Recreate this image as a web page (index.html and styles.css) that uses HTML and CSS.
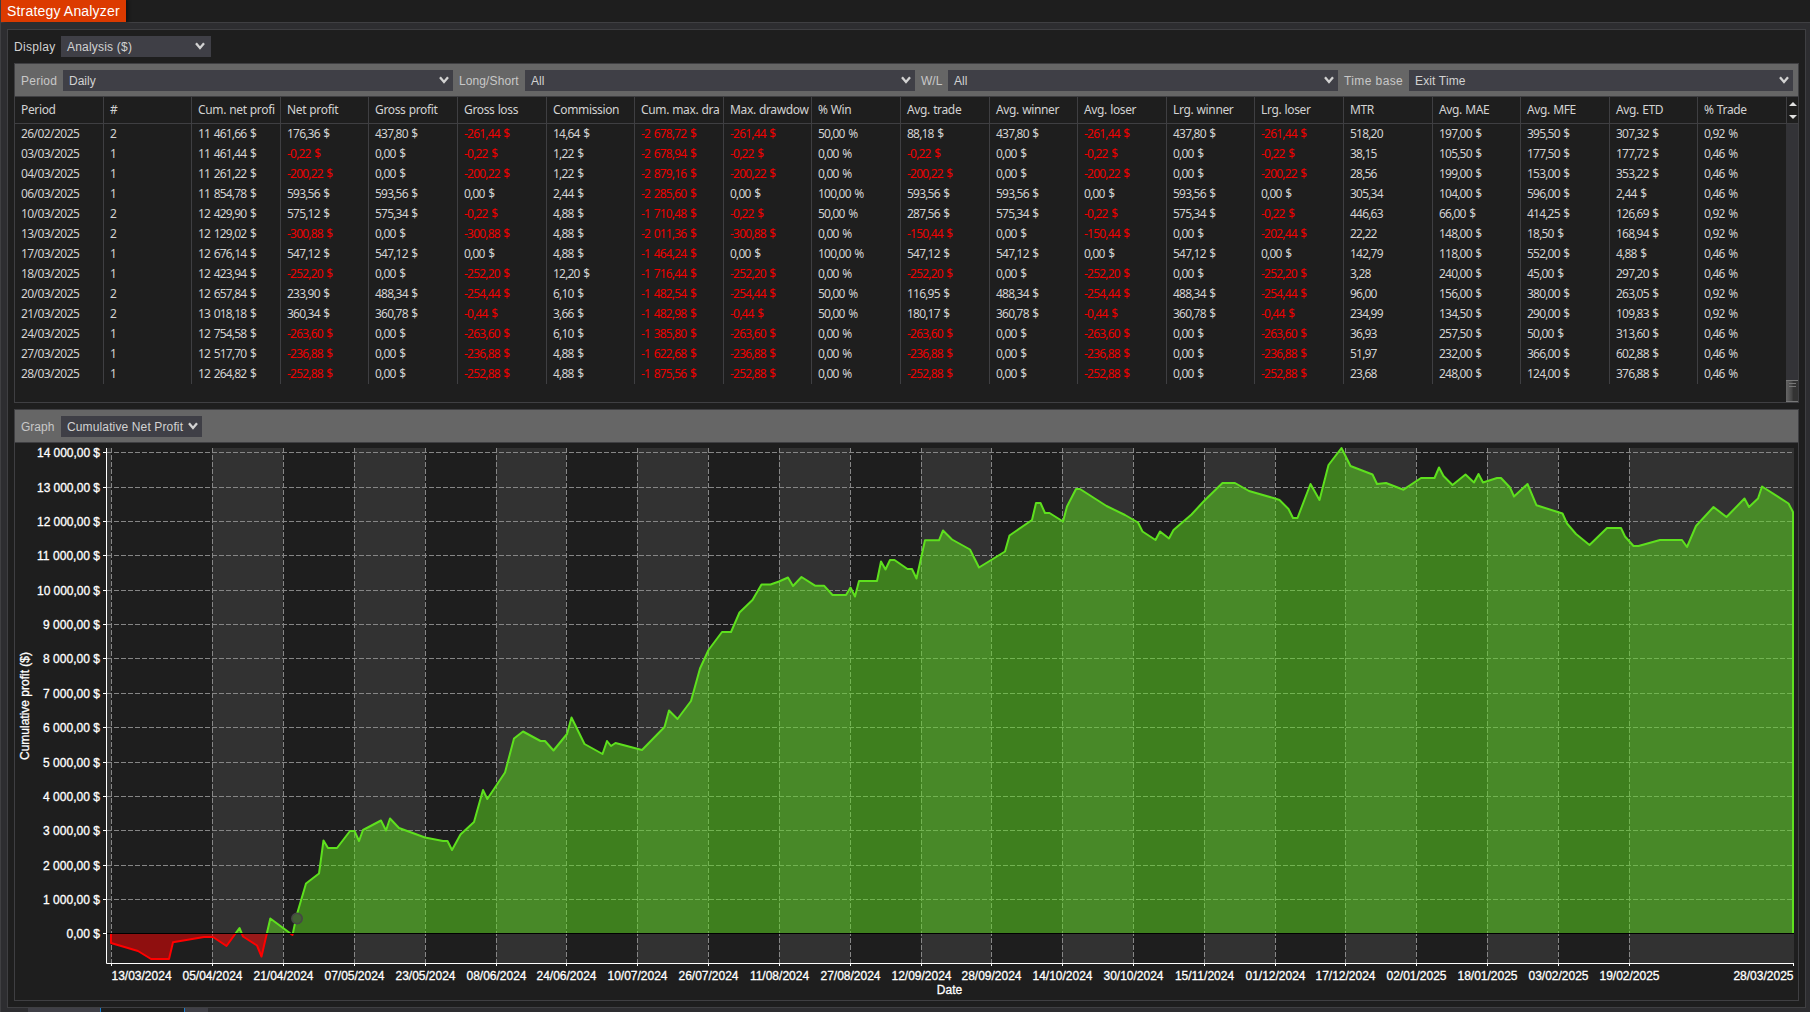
FILE: index.html
```html
<!DOCTYPE html>
<html lang="en">
<head>
<meta charset="utf-8">
<title>Strategy Analyzer</title>
<link rel="stylesheet" href="styles.css">
</head>
<body>
<div class="window">
  <header class="tabs"><div class="tab">Strategy Analyzer</div></header>
  <main class="frame">
    <div class="content">
      <div class="display-bar">
        <span class="label">Display</span>
        <div class="select select-display"><span>Analysis ($)</span><svg class="chevron" viewBox="0 0 10 8"><path d="M1 1.2 5 6 9 1.2"/></svg></div>
      </div>
      <section class="panel table-panel">
        <div class="toolbar">
          <span class="label label-period">Period</span>
          <div class="select"><span>Daily</span><svg class="chevron" viewBox="0 0 10 8"><path d="M1 1.2 5 6 9 1.2"/></svg></div>
          <span class="label label-side">Long/Short</span>
          <div class="select"><span>All</span><svg class="chevron" viewBox="0 0 10 8"><path d="M1 1.2 5 6 9 1.2"/></svg></div>
          <span class="label label-wl">W/L</span>
          <div class="select"><span>All</span><svg class="chevron" viewBox="0 0 10 8"><path d="M1 1.2 5 6 9 1.2"/></svg></div>
          <span class="label label-time">Time base</span>
          <div class="select select-time"><span>Exit Time</span><svg class="chevron" viewBox="0 0 10 8"><path d="M1 1.2 5 6 9 1.2"/></svg></div>
        </div>
        <div class="grid-area">
          <div class="grid" id="grid"></div>
          <div class="scrollbar">
            <div class="arrows">
              <svg viewBox="0 0 12 26"><path d="M2 9h8L6 5zM2 18h8l-4 4z"/></svg>
            </div>
            <div class="track"></div>
            <div class="thumb"><i></i><i></i></div>
          </div>
        </div>
      </section>
      <section class="panel graph-panel">
        <div class="toolbar">
          <span class="label label-graph">Graph</span>
          <div class="select select-graph"><span>Cumulative Net Profit</span><svg class="chevron" viewBox="0 0 10 8"><path d="M1 1.2 5 6 9 1.2"/></svg></div>
        </div>
        <svg class="chart" id="chart" viewBox="15 443 1783 557"></svg>
      </section>
    </div>
  </main>
  <footer class="bottom-tabs"><div class="bt bt-first"></div><div class="bt bt-active"></div><div class="bt bt-last"></div></footer>
</div>
<script src="app.js"></script>
</body>
</html>
```
FILE: styles.css
```css
* { box-sizing: border-box; }

body {
  margin: 0;
  background: #1e1e1e;
  color: #d2d2d2;
  font: 12px/14px "Liberation Sans", Arial, sans-serif;
  overflow: hidden;
}

.window {
  display: flex;
  flex-direction: column;
  width: 1810px;
  height: 1012px;
  border-left: 1px solid #3f3f42;
}

.tabs {
  display: flex;
  height: 23px;
  border-bottom: 1px solid #3f3f42;
}

.tab {
  width: 125px;
  padding: 3px 0 0 6px;
  background: #dc3a00;
  color: #fff;
  font-size: 14px;
  line-height: 16px;
  letter-spacing: 0.18px;
  box-shadow: 2px 0 3px #111;
}

.frame {
  display: flex;
  height: 985px;
  padding: 6px 4px 0 6px;
  background: #2d2d30;
}

.content {
  display: flex;
  flex-direction: column;
  width: 1799px;
  height: 979px;
  padding: 6px 6px 0;
  border: 1px solid #3f3f42;
  background: #1e1e1e;
}

.display-bar {
  display: flex;
  align-items: center;
  height: 21px;
  margin-bottom: 6px;
}

.display-bar .label { width: 47px; letter-spacing: 0.3px; }

.select {
  display: flex;
  align-items: center;
  justify-content: space-between;
  width: 390px;
  height: 21px;
  padding: 0 4px 0 6px;
  background: #3f3f46;
}

.select-display { width: 150px; padding-right: 6px; letter-spacing: 0.2px; }
.select-time { width: 384px; letter-spacing: 0.15px; }
.select-graph { width: 141px; letter-spacing: 0.13px; }

.chevron {
  flex: none;
  width: 10px;
  height: 8px;
  margin-top: -2px;
  fill: none;
  stroke: #d2d2d2;
  stroke-width: 2.3;
}

.panel {
  display: flex;
  flex-direction: column;
  width: 1785px;
  border: 1px solid #3f3f42;
}

.table-panel { height: 340px; margin-bottom: 6px; }
.graph-panel { height: 592px; }

.toolbar {
  display: flex;
  align-items: center;
  flex: none;
  height: 33px;
  padding: 1px 0 0 6px;
  border-bottom: 1px solid #3f3f42;
  background: #666;
  white-space: nowrap;
}

.toolbar .label { color: #c8c8c8; }
.label-period { width: 42px; letter-spacing: 0.25px; }
.label-side { width: 72px; padding-left: 6px; letter-spacing: 0.1px; }
.label-wl { width: 33px; padding-left: 6px; }
.label-time { width: 71px; padding-left: 6px; letter-spacing: 0.4px; }
.label-graph { width: 40px; }

.grid-area { display: flex; height: 305px; }

.grid {
  width: 1771px;
  font: 12px/20px "Noto Sans", "Open Sans", sans-serif;
  letter-spacing: -0.8px;
  word-spacing: 1.2px;
}

.row {
  display: grid;
  grid-template-columns: 89px 88px 89px 88px 89px 89px 88px 89px 88px 89px 89px 88px 89px 88px 89px 89px 88px 89px 88px 88px;
  height: 20px;
}

.head {
  height: 27px;
  border-bottom: 1px solid #3f3f42;
  line-height: 25px;
  letter-spacing: -0.35px;
  word-spacing: 0.4px;
}

.cell {
  padding-left: 6px;
  border-right: 1px solid #3f3f42;
  white-space: nowrap;
  overflow: hidden;
}

.cell:last-child { border-right: 0; }
.cell-date { letter-spacing: -0.56px; }
.neg { color: #f00000; }

.scrollbar {
  display: flex;
  flex-direction: column;
  width: 12px;
}

.arrows { height: 27px; border: solid #3f3f42; border-width: 0 0 1px 1px; }
.arrows svg { display: block; width: 12px; height: 26px; fill: #e0e0e0; }
.track { height: 256px; background: #333337; }
.thumb {
  display: flex;
  flex-direction: column;
  gap: 2px;
  height: 22px;
  padding: 2px 2px 0 3px;
  border: solid #777;
  border-width: 1px 0;
  background: linear-gradient(90deg, #666 0, #444 50%, #333 60%);
}
.thumb i { height: 1px; background: #777; }

.chart { display: block; flex: none; width: 1783px; height: 557px; }
.band { fill: #323232; }
.gridline { stroke: #868686; stroke-dasharray: 5 2; fill: none; }
.axis { stroke: #fff; fill: none; }
.zero { stroke: #000; }
.gain { fill: #5ee01e; fill-opacity: 0.5; }
.loss { fill: #f00; fill-opacity: 0.5; }
.gain-line, .loss-line { fill: none; stroke-width: 2; stroke-linejoin: round; }
.gain-line { stroke: #5ee01e; }
.loss-line { stroke: #f00; }
.marker { fill: #425f35; stroke: #464646; stroke-width: 1.5; }
.axis-text { fill: #fff; font-size: 12px; stroke: #fff; stroke-width: 0.3px; }

.bottom-tabs {
  display: flex;
  height: 4px;
  padding-left: 27px;
  background: #2d2d30;
}
.bt { background: #3f3f46; }
.bt-first { width: 72px; }
.bt-active { width: 85px; border: solid #1c7fd0; border-width: 0 1px; background: #1e1e1e; }
.bt-last { width: 23px; }
```
FILE: app.js
```js
const headers = ['Period', '#', 'Cum. net profi', 'Net profit', 'Gross profit', 'Gross loss', 'Commission',
  'Cum. max. dra', 'Max. drawdow', '% Win', 'Avg. trade', 'Avg. winner', 'Avg. loser', 'Lrg. winner',
  'Lrg. loser', 'MTR', 'Avg. MAE', 'Avg. MFE', 'Avg. ETD', '% Trade'];

// One unit mark per column, appended to the raw numbers below.
const units = ['', '', '$', '$', '$', '$', '$', '$', '$', '%', '$', '$', '$', '$', '$', '', '$', '$', '$', '%'];

const rows = `26/02/2025|2|11 461,66|176,36|437,80|-261,44|14,64|-2 678,72|-261,44|50,00|88,18|437,80|-261,44|437,80|-261,44|518,20|197,00|395,50|307,32|0,92
03/03/2025|1|11 461,44|-0,22|0,00|-0,22|1,22|-2 678,94|-0,22|0,00|-0,22|0,00|-0,22|0,00|-0,22|38,15|105,50|177,50|177,72|0,46
04/03/2025|1|11 261,22|-200,22|0,00|-200,22|1,22|-2 879,16|-200,22|0,00|-200,22|0,00|-200,22|0,00|-200,22|28,56|199,00|153,00|353,22|0,46
06/03/2025|1|11 854,78|593,56|593,56|0,00|2,44|-2 285,60|0,00|100,00|593,56|593,56|0,00|593,56|0,00|305,34|104,00|596,00|2,44|0,46
10/03/2025|2|12 429,90|575,12|575,34|-0,22|4,88|-1 710,48|-0,22|50,00|287,56|575,34|-0,22|575,34|-0,22|446,63|66,00|414,25|126,69|0,92
13/03/2025|2|12 129,02|-300,88|0,00|-300,88|4,88|-2 011,36|-300,88|0,00|-150,44|0,00|-150,44|0,00|-202,44|22,22|148,00|18,50|168,94|0,92
17/03/2025|1|12 676,14|547,12|547,12|0,00|4,88|-1 464,24|0,00|100,00|547,12|547,12|0,00|547,12|0,00|142,79|118,00|552,00|4,88|0,46
18/03/2025|1|12 423,94|-252,20|0,00|-252,20|12,20|-1 716,44|-252,20|0,00|-252,20|0,00|-252,20|0,00|-252,20|3,28|240,00|45,00|297,20|0,46
20/03/2025|2|12 657,84|233,90|488,34|-254,44|6,10|-1 482,54|-254,44|50,00|116,95|488,34|-254,44|488,34|-254,44|96,00|156,00|380,00|263,05|0,92
21/03/2025|2|13 018,18|360,34|360,78|-0,44|3,66|-1 482,98|-0,44|50,00|180,17|360,78|-0,44|360,78|-0,44|234,99|134,50|290,00|109,83|0,92
24/03/2025|1|12 754,58|-263,60|0,00|-263,60|6,10|-1 385,80|-263,60|0,00|-263,60|0,00|-263,60|0,00|-263,60|36,93|257,50|50,00|313,60|0,46
27/03/2025|1|12 517,70|-236,88|0,00|-236,88|4,88|-1 622,68|-236,88|0,00|-236,88|0,00|-236,88|0,00|-236,88|51,97|232,00|366,00|602,88|0,46
28/03/2025|1|12 264,82|-252,88|0,00|-252,88|4,88|-1 875,56|-252,88|0,00|-252,88|0,00|-252,88|0,00|-252,88|23,68|248,00|124,00|376,88|0,46`
  .split('\n').map(line => line.split('|'));

const cell = (text, cls = '') => `<div class="cell ${cls}">${text}</div>`;
document.getElementById('grid').innerHTML =
  `<div class="row head">${headers.map(h => cell(h)).join('')}</div>` +
  rows.map(r => `<div class="row">${r.map((v, i) =>
    cell(units[i] ? `${v} ${units[i]}` : v, v[0] === '-' ? 'neg' : i === 0 ? 'cell-date' : '')).join('')}</div>`).join('');

// Chart
const xs = [111, 212, 283, 354, 425, 496, 566, 637, 708, 779, 850, 921, 991, 1062, 1133, 1204, 1275, 1345, 1416, 1487, 1558, 1629, 1793];
const dates = ['13/03/2024', '05/04/2024', '21/04/2024', '07/05/2024', '23/05/2024', '08/06/2024', '24/06/2024',
  '10/07/2024', '26/07/2024', '11/08/2024', '27/08/2024', '12/09/2024', '28/09/2024', '14/10/2024', '30/10/2024',
  '15/11/2024', '01/12/2024', '17/12/2024', '02/01/2025', '18/01/2025', '03/02/2025', '19/02/2025', '28/03/2025'];
const ys = [933, 899, 865, 830, 796, 762, 727, 693, 658, 624, 590, 555, 521, 487, 452];
const curve = `111,933.5 111,943 138,951 151,959 169,959 173,942.3 204,937 213,937 226.5,946 239.5,928 243,936.5 257,945.5
261.5,956.5 270.3,918.5 292.5,935 297,914 306,883.5 319,873.5 323.5,840.5 328,848 337,848 350,831 354.5,831 359,841
363,830 381,820.5 386,830.5 390,818.5 399,828 425,837.5 443,841 447.5,841 452,850 460.5,834.5 474,822 483,790 487.3,799
505,772.5 514,738.5 523,731.5 540.5,741 545,741 553.5,750.5 567,734 571.5,717.5 584.5,744 602.5,754 607,741 611,746
615.5,743 642,750 664.5,727 669,710.5 677.5,719 691,701 700,668.5 708.5,650 722,632 731,632 739.5,612.5 752.5,600
761.5,584.5 770.5,584.5 779,581.5 788,577.5 793,586 801.5,577 815,585.7 824,585.7 832.5,595 846,595 850.5,587.5
855,596.5 859,581 877,581 881,561.5 885.5,569.5 890,560 894.5,560 907.5,569 912,569 916.5,578.5 925,540.3 939,540.3
943,530.5 952,539.5 970,549.5 979,567.5 992,559.5 1005,551.5 1009.5,535.5 1032,520 1036,503 1040.5,503 1045,513
1049.5,513 1063,521.5 1067,506.5 1076,489 1080,489 1106.5,506 1125,515 1138,522.5 1142.5,531.5 1155.5,540 1160,531.5
1169,538.5 1173.5,530 1191.5,514.5 1204,501 1222.5,483 1235,483 1249,491 1275,498.5 1279.5,500 1288.5,509 1293,518
1297.5,518 1310.5,484 1319.5,500 1328.5,465 1341.5,448 1350.5,466 1372.5,474.5 1377,484 1386,483 1403.5,489.7
1421,478 1434.5,478 1439,467.5 1443.5,476 1452.5,485 1465.5,474.5 1474,482.5 1478.5,474 1483,482.5 1497,478 1501,478
1510,487.5 1514,496.5 1527.5,484 1536.5,505.3 1562.5,513.5 1567,523.5 1576,534 1589.5,545 1607,528 1621,528 1625,536.5
1633.5,546 1638.5,546 1660,540 1682,540 1687,547 1696,526 1713.5,507 1726.5,517 1744.5,498.5 1749,507 1758,498.5
1762,486.5 1788.5,503.5 1793,512 1793,933.5`;

const edges = [107, ...xs];
let s = `<defs><clipPath id="up"><path d="M100 440H1799V933.5H100z"/></clipPath>
<clipPath id="down"><path d="M100 933.5H1799V963H100z"/></clipPath></defs>`;
for (let i = 0; i < edges.length - 1; i += 2) {
  s += `<path class="band" d="M${edges[i]} 448H${edges[i + 1] + (i === 22 ? 1 : 0)}V963H${edges[i]}z"/>`;
}
ys.slice(1).forEach(y => { s += `<path class="gridline" d="M107 ${y + .5}H1794"/>`; });
xs.slice(0, -1).forEach(x => { s += `<path class="gridline" d="M${x + .5} 448V963"/>`; });
s += `<polygon class="gain" clip-path="url(#up)" points="${curve}"/><polygon class="loss" clip-path="url(#down)" points="${curve}"/>
<polyline class="gain-line" clip-path="url(#up)" points="${curve}"/><polyline class="loss-line" clip-path="url(#down)" points="${curve}"/>
<path class="zero" d="M107 933.5H1794"/><circle class="marker" cx="297" cy="918.5" r="5.2"/>
<path class="axis" d="M106.5 448V963.5H1794"/>`;
ys.forEach((y, k) => {
  s += `<path class="axis" d="M103 ${y + .5}H106"/>
<text class="axis-text" x="100" y="${y + 5}" text-anchor="end" textLength="${k > 9 ? 63 : k ? 57 : 33.5}">${k ? k + ' 000' : '0'},00 $</text>`;
});
xs.forEach((x, i) => {
  const anchor = i === 0 ? 'start' : i === 22 ? 'end' : 'middle';
  s += `<path class="axis" d="M${x + .5} 963V966"/><text class="axis-text" x="${x + .5}" y="980" text-anchor="${anchor}">${dates[i]}</text>`;
});
s += `<text class="axis-text" x="949.5" y="994" text-anchor="middle">Date</text>
<text class="axis-text" transform="translate(29 706) rotate(-90)" text-anchor="middle">Cumulative profit ($)</text>`;
document.getElementById('chart').innerHTML = s;
```
